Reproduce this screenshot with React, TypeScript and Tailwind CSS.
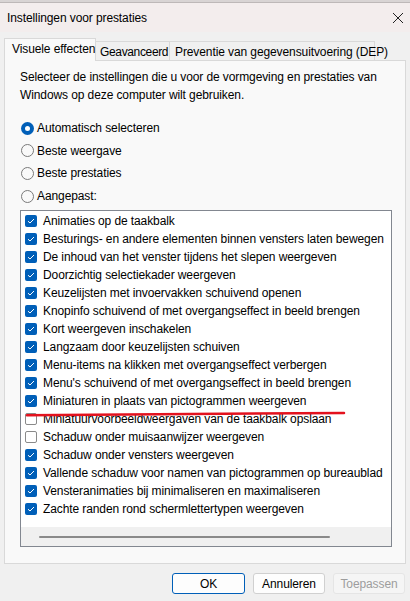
import React from "react";

const items: [string, boolean][] = [
  ["Animaties op de taakbalk", true],
  ["Besturings- en andere elementen binnen vensters laten bewegen", true],
  ["De inhoud van het venster tijdens het slepen weergeven", true],
  ["Doorzichtig selectiekader weergeven", true],
  ["Keuzelijsten met invoervakken schuivend openen", true],
  ["Knopinfo schuivend of met overgangseffect in beeld brengen", true],
  ["Kort weergeven inschakelen", true],
  ["Langzaam door keuzelijsten schuiven", true],
  ["Menu-items na klikken met overgangseffect verbergen", true],
  ["Menu's schuivend of met overgangseffect in beeld brengen", true],
  ["Miniaturen in plaats van pictogrammen weergeven", true],
  ["Miniatuurvoorbeeldweergaven van de taakbalk opslaan", false],
  ["Schaduw onder muisaanwijzer weergeven", false],
  ["Schaduw onder vensters weergeven", true],
  ["Vallende schaduw voor namen van pictogrammen op bureaublad", true],
  ["Vensteranimaties bij minimaliseren en maximaliseren", true],
  ["Zachte randen rond schermlettertypen weergeven", true],
];

const radios = ["Automatisch selecteren", "Beste weergave", "Beste prestaties", "Aangepast:"];

function Check({ on }: { on: boolean }) {
  if (!on)
    return <span className="w-[12px] h-[12px] rounded-[2px] border border-[#8a8a8a] bg-white shrink-0" />;
  return (
    <span className="w-[12px] h-[12px] rounded-[2px] bg-[#005fb8] shrink-0 flex items-center justify-center">
      <svg width="8" height="8" viewBox="0 0 8 8">
        <path d="M1 4.2 L3 6 L7 2" fill="none" stroke="white" strokeWidth="1" />
      </svg>
    </span>
  );
}

function Radio({ on }: { on: boolean }) {
  if (on)
    return (
      <span className="w-[13px] h-[13px] rounded-full bg-[#005fb8] shrink-0 flex items-center justify-center">
        <span className="w-[5px] h-[5px] rounded-full bg-white" />
      </span>
    );
  return <span className="w-[13px] h-[13px] rounded-full border border-[#7a7a7a] bg-[#f9f9f9] shrink-0" />;
}

export default function App() {
  return (
    <div className="w-[410px] h-[601px] bg-[#f0f0f0] text-[12px] tracking-[-0.1px] text-black flex flex-col overflow-hidden font-['Segoe_UI','Liberation_Sans',sans-serif]">
      {/* background behind window */}
      <div className="h-[3px] bg-[#d8d4d4] border-b border-[#bdb8b8]" />

      {/* title bar */}
      <div className="h-[29px] bg-[#f3eded] flex items-center justify-between pl-[7px] pr-[5px] shrink-0">
        <span className="text-[12px]">Instellingen voor prestaties</span>
        <svg width="12" height="12" viewBox="0 0 12 12" className="mr-[1px]">
          <path d="M1 1 L11 11 M11 1 L1 11" stroke="#222" strokeWidth="1" />
        </svg>
      </div>

      <div className="px-[4px] pt-[6px] flex flex-col">
        {/* tabs */}
        <div className="flex items-end h-[22px] relative z-10 whitespace-nowrap">
          <div className="w-[92px] h-[23px] -mb-px bg-[#f9f9f9] border border-b-0 border-[#d9d9d9] pl-[7px] pt-[3px] leading-[14px]">
            Visuele effecten
          </div>
          <div className="w-[74px] h-[19px] border border-l-0 border-b-0 border-[#d9d9d9] bg-[#f0f0f0] pl-[4px] pt-[3px] leading-[14px] tracking-[-0.35px] overflow-hidden">
            Geavanceerd
          </div>
          <div className="w-[205px] h-[19px] border border-l-0 border-b-0 border-[#d9d9d9] bg-[#f0f0f0] pl-[5px] pt-[3px] leading-[14px]">
            Preventie van gegevensuitvoering (DEP)
          </div>
        </div>

        {/* panel */}
        <div className="w-[402px] h-[504px] bg-[#f9f9f9] border border-[#d9d9d9] pl-[15px] pt-[7px]">
          <p className="leading-[18px]">
            Selecteer de instellingen die u voor de vormgeving en prestaties van
            <br />
            Windows op deze computer wilt gebruiken.
          </p>

          <div className="mt-[13px] flex flex-col">
            {radios.map((r, i) => (
              <div key={r} className="h-[22.6px] flex items-center gap-[3px] pl-[1px]">
                <Radio on={i === 0} />
                <span>{r}</span>
              </div>
            ))}
          </div>

          <div className="relative mt-[3px] w-[372px] h-[337px] border border-[#828790] bg-white flex flex-col">
            <div className="pt-[1px] flex-1">
              {items.map(([t, on]) => (
                <div key={t} className="h-[18px] flex items-center gap-[6px] pl-[4px] whitespace-nowrap">
                  <Check on={on} />
                  <span>{t}</span>
                </div>
              ))}
            </div>
            <div className="h-[19px] bg-[#f0f0f0] flex items-center pl-[18px]">
              <div className="w-[291px] h-[2px] rounded-full bg-[#8a8a8a]" />
            </div>
            <svg className="absolute left-0 top-0 pointer-events-none" width="372" height="337">
              <path d="M6 204.2 Q160 203.5 323 202" fill="none" stroke="#e3121e" strokeWidth="2.5" strokeLinecap="round" />
            </svg>
          </div>
        </div>

        {/* buttons */}
        <div className="flex justify-end gap-[8px] mt-[9px] pr-[1px]">
          <button className="w-[73px] h-[21px] rounded-[3px] border border-[#005fb8] bg-[#fdfdfd] text-[12px] leading-none">
            OK
          </button>
          <button className="w-[72px] h-[21px] rounded-[3px] border border-[#d0d0d0] bg-[#fdfdfd] text-[12px] leading-none">
            Annuleren
          </button>
          <button className="w-[72px] h-[21px] rounded-[3px] border border-[#e5e5e5] bg-[#f5f5f5] text-[#9d9d9d] text-[12px] leading-none">
            Toepassen
          </button>
        </div>
      </div>
    </div>
  );
}
